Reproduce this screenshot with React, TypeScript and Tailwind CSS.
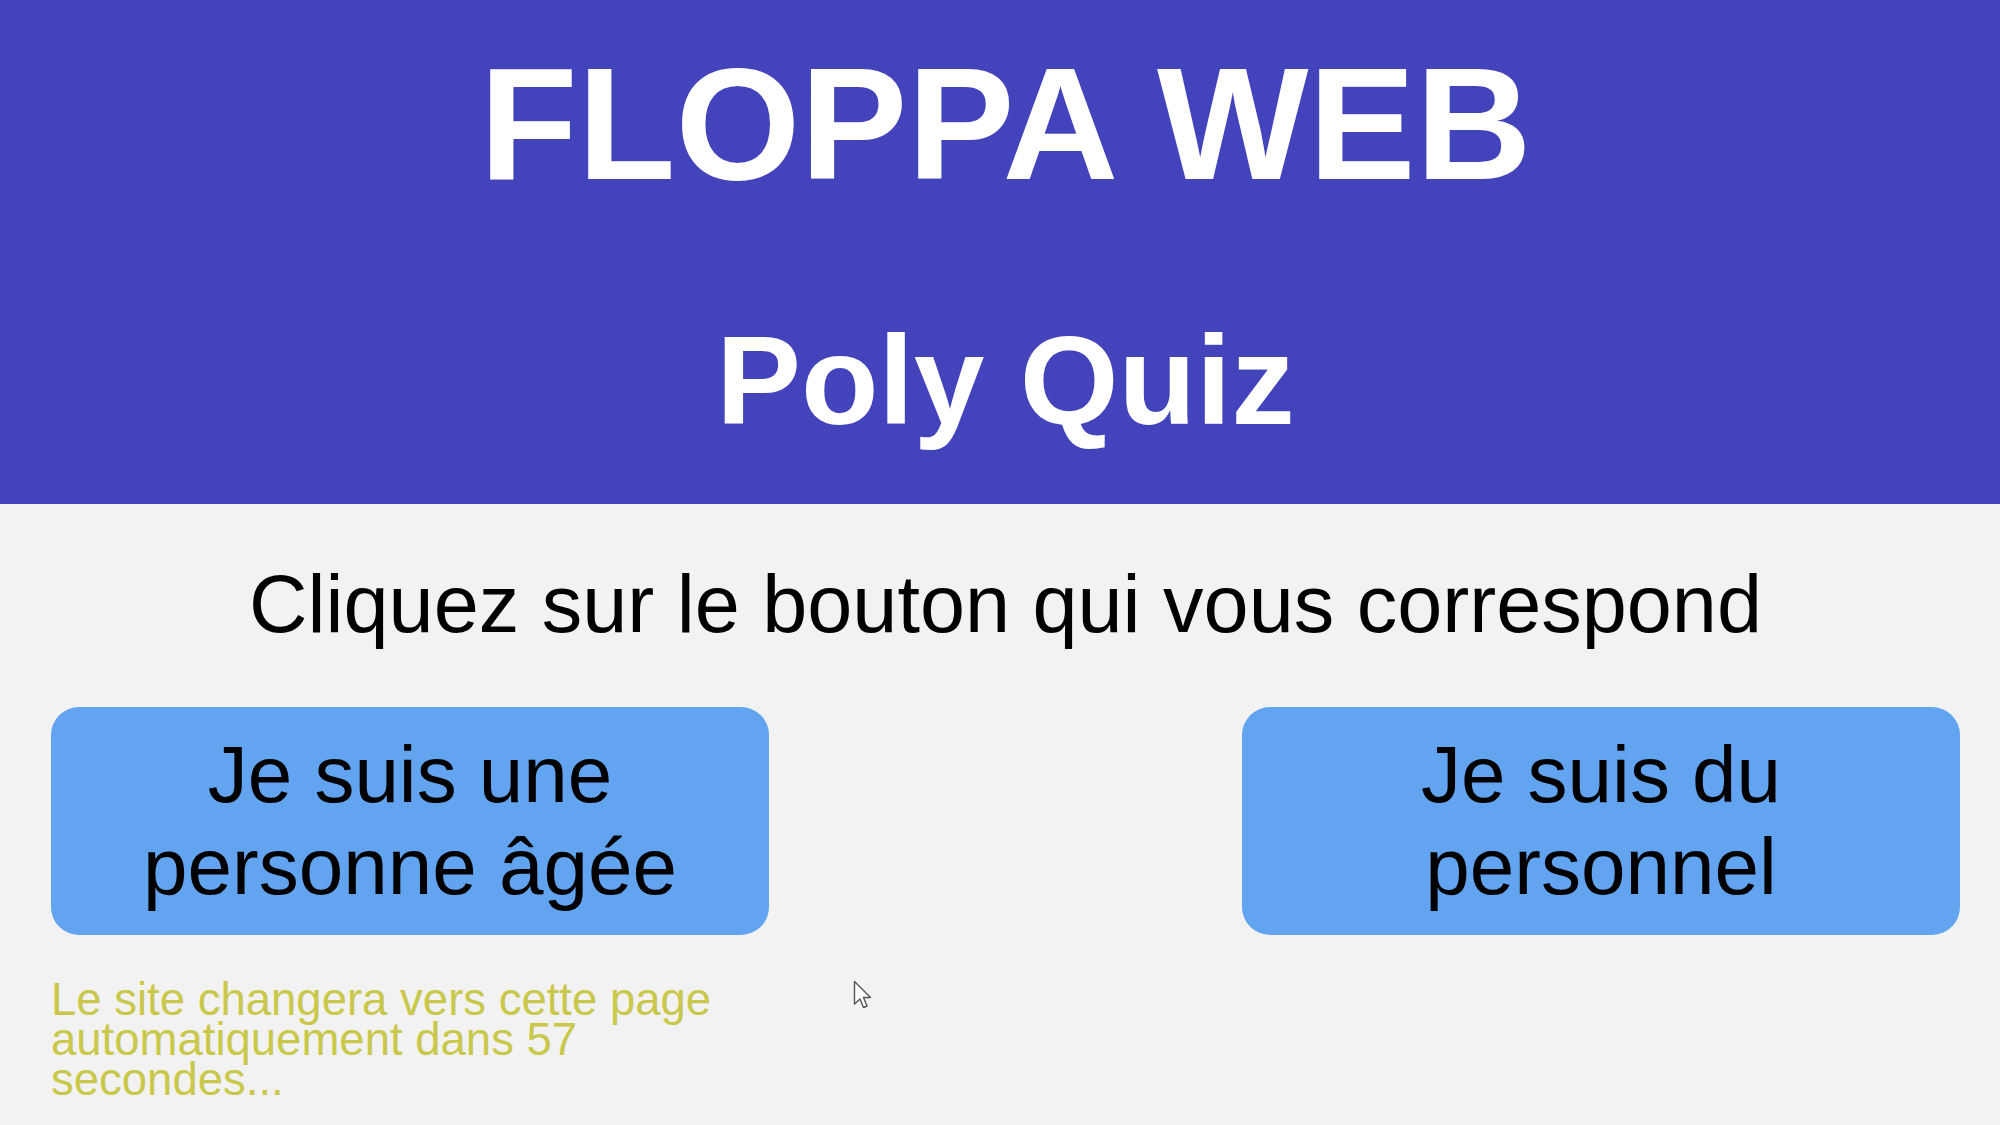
import React from "react";

const font = { fontFamily: '"Liberation Sans", Arial, sans-serif' };

function Cursor() {
  // the mouse pointer captured in the screenshot
  return (
    <svg
      className="absolute left-[853px] top-[980px]"
      width="22"
      height="32"
      viewBox="0 0 22 32"
    >
      <path
        d="M1.5 1.5 L1.5 24 L7 19 L10.5 27.5 L14 26 L10.5 17.5 L17.5 17.5 Z"
        fill="#ffffff"
        stroke="#555555"
        strokeWidth="1.4"
        strokeLinejoin="round"
      />
    </svg>
  );
}

export default function App() {
  return (
    <div className="relative min-h-[1125px] w-full bg-[#f2f2f2]" style={font}>
      {/* Header */}
      <header className="flex h-[504px] flex-col items-center bg-[#4343bb] pl-[11px] pt-[44px] text-white">
        <h1 className="text-[160.5px] font-bold leading-none">FLOPPA WEB</h1>
        <h2 className="mt-[112px] text-[127px] font-bold leading-none">Poly Quiz</h2>
      </header>

      {/* Body */}
      <p className="mt-[60px] pl-[11px] text-center text-[81px] leading-none text-black">
        Cliquez sur le bouton qui vous correspond
      </p>

      <div className="mt-[62px] flex justify-between pl-[51px] pr-[40px]">
        <div className="flex w-[718px] flex-col">
          <button className="h-[228px] w-full rounded-[28px] bg-[#62a4ef] text-center text-[80px] leading-[92px] text-black">
            Je suis une
            <br />
            personne âgée
          </button>
          <p className="mt-[45px] text-[45.5px] leading-[40px] text-[#c9c84a]">
            Le site changera vers cette page automatiquement dans 57 secondes...
          </p>
        </div>
        <div className="w-[718px]">
          <button className="h-[228px] w-full rounded-[28px] bg-[#62a4ef] text-center text-[80px] leading-[92px] text-black">
            Je suis du
            <br />
            personnel
          </button>
        </div>
      </div>

      <Cursor />
    </div>
  );
}
